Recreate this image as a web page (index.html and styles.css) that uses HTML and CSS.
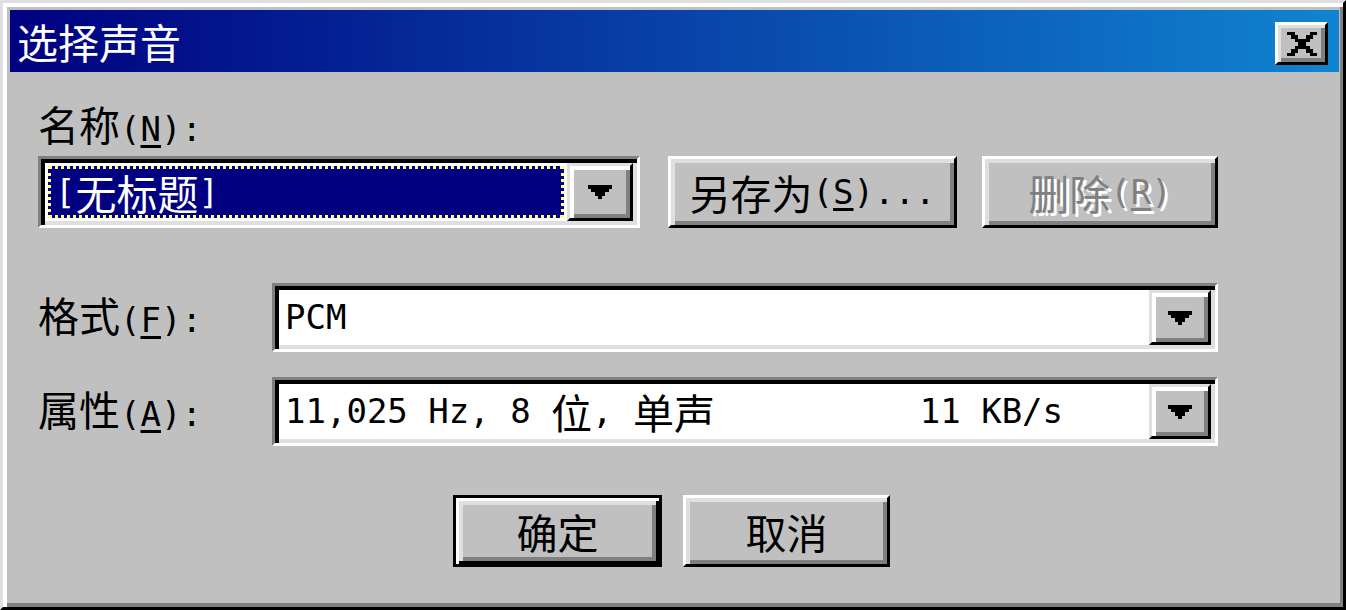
FILE: index.html
```html
<!DOCTYPE html>
<html>
<head>
  <meta charset="utf-8">
  <title>选择声音</title>
  <link rel="stylesheet" href="styles.css">
</head>
<body>
  <div class="window">
    <div class="titlebar">
      <span class="title zh">选择声音</span>
      <button class="close-btn" type="button">
        <svg width="30" height="24" viewBox="0 0 8 7" preserveAspectRatio="none" shape-rendering="crispEdges">
          <path d="M0 0h2v1h-2z M6 0h2v1h-2z M1 1h2v1h-2z M5 1h2v1h-2z M2 2h4v1h-4z M3 3h2v1h-2z M2 4h4v1h-4z M1 5h2v1h-2z M5 5h2v1h-2z M0 6h2v1h-2z M6 6h2v1h-2z" fill="#000"/>
        </svg>
      </button>
    </div>

    <div class="dialog">
      <div class="name-label"><span class="zh">名称</span>(<u>N</u>):</div>

      <div class="field-row row-name">
        <div class="combo combo-name">
          <div class="field field-sel">
            <span class="focus">[<span class="zh">无标题</span>]</span>
          </div>
          <div class="drop-btn">
            <svg width="24" height="14" viewBox="0 0 7 4" preserveAspectRatio="none" shape-rendering="crispEdges"><path d="M0 0h7v1h-7z M1 1h5v1h-5z M2 2h3v1h-3z M3 3h1v1h-1z" fill="#000"/></svg>
          </div>
        </div>
        <button class="btn btn-save" type="button"><span class="zh">另存为</span>(<u>S</u>)...</button>
        <button class="btn btn-delete" type="button" disabled><span class="zh">删除</span>(<u>R</u>)</button>
      </div>

      <div class="field-row row-format">
        <div class="label"><span class="zh">格式</span>(<u>F</u>):</div>
        <div class="combo combo-wide">
          <div class="field">PCM</div>
          <div class="drop-btn">
            <svg width="24" height="14" viewBox="0 0 7 4" preserveAspectRatio="none" shape-rendering="crispEdges"><path d="M0 0h7v1h-7z M1 1h5v1h-5z M2 2h3v1h-3z M3 3h1v1h-1z" fill="#000"/></svg>
          </div>
        </div>
      </div>

      <div class="field-row row-attr">
        <div class="label"><span class="zh">属性</span>(<u>A</u>):</div>
        <div class="combo combo-wide">
          <div class="field">11,025 Hz, 8 <span class="zh">位</span>, <span class="zh">单声</span>          11 KB/s</div>
          <div class="drop-btn">
            <svg width="24" height="14" viewBox="0 0 7 4" preserveAspectRatio="none" shape-rendering="crispEdges"><path d="M0 0h7v1h-7z M1 1h5v1h-5z M2 2h3v1h-3z M3 3h1v1h-1z" fill="#000"/></svg>
          </div>
        </div>
      </div>

      <div class="button-row">
        <button class="btn btn-default btn-ok" type="button"><span class="zh">确定</span></button>
        <button class="btn btn-cancel" type="button"><span class="zh">取消</span></button>
      </div>
    </div>
  </div>
</body>
</html>
```

FILE: styles.css
```css
html, body {
  margin: 0;
  padding: 0;
}
body {
  background: #c0c0c0;
  font-family: "DejaVu Sans Mono", "Noto Sans CJK SC", monospace;
  font-size: 34px;
  color: #000;
}
.zh {
  font-family: "Noto Sans CJK SC", sans-serif;
  font-size: 41px;
}
u {
  text-decoration-thickness: 3px;
  text-underline-offset: 4px;
}

/* window frame */
.window {
  width: 1346px;
  height: 610px;
  box-sizing: border-box;
  background: #c0c0c0;
  border: 3px solid;
  border-color: #dfdfdf #000 #000 #dfdfdf;
  box-shadow: inset 4px 4px 0 #fff, inset -3px -4px 0 #808080;
  padding: 7px 4px 7px 7px;
  display: flex;
  flex-direction: column;
}
.titlebar {
  height: 62px;
  flex: none;
  display: flex;
  align-items: center;
  justify-content: space-between;
  padding: 0 11px 0 7px;
  background: linear-gradient(to right, #000080, #1084d0);
  color: #fff;
}
.title {
  line-height: 62px;
}
.close-btn {
  width: 53px;
  height: 43px;
  margin-top: 5px;
  padding: 0;
  box-sizing: border-box;
  background: #c0c0c0;
  border: 3px solid;
  border-color: #fff #000 #000 #fff;
  box-shadow: inset 3px 3px 0 #dfdfdf, inset -4px -4px 0 #808080;
  display: flex;
  align-items: center;
  justify-content: center;
}

/* dialog body */
.dialog {
  flex: 1;
}
.name-label {
  margin: 31px 0 0 28px;
  height: 41px;
  line-height: 41px;
}
.field-row {
  display: flex;
  align-items: center;
  padding: 0 121px 0 28px;
}
.row-name {
  margin-top: 12px;
  height: 72px;
}
.row-format {
  margin-top: 55px;
  height: 69px;
}
.row-attr {
  margin-top: 25px;
  height: 69px;
}
.label {
  width: 234px;
  flex: none;
  line-height: 41px;
}

/* combo boxes */
.combo {
  display: flex;
  height: 100%;
  box-sizing: border-box;
  background: #fff;
  border: 3px solid;
  border-color: #808080 #fff #fff #808080;
  box-shadow: inset 4px 4px 0 #000, inset -4px -4px 0 #dfdfdf;
  padding: 4px;
}
.combo-name {
  width: 602px;
  flex: none;
  margin-right: 28px;
}
.combo-wide {
  flex: 1;
}
.field {
  flex: 1;
  display: flex;
  align-items: center;
  white-space: pre;
  line-height: 41px;
  padding-left: 6px;
}
.field-sel {
  padding: 3px;
}
.focus {
  flex: 1;
  align-self: stretch;
  display: flex;
  align-items: center;
  padding-left: 4px;
  background: #000080;
  color: #fff;
  border: 3px dotted #ffff80;
}
.drop-btn {
  width: 62px;
  flex: none;
  box-sizing: border-box;
  background: #c0c0c0;
  border: 3px solid;
  border-color: #dfdfdf #000 #000 #dfdfdf;
  box-shadow: inset 4px 4px 0 #fff, inset -4px -4px 0 #808080;
  display: flex;
  align-items: center;
  justify-content: center;
}
.combo-name .drop-btn {
  width: 66px;
}

/* push buttons */
.btn {
  height: 72px;
  padding: 0;
  box-sizing: border-box;
  background: #c0c0c0;
  color: #000;
  font-family: inherit;
  font-size: inherit;
  line-height: 41px;
  white-space: pre;
  border: 3px solid;
  border-color: #fff #000 #000 #fff;
  box-shadow: inset 4px 4px 0 #dfdfdf, inset -4px -4px 0 #808080;
  display: flex;
  align-items: center;
  justify-content: center;
}
.btn-save {
  width: 289px;
  flex: none;
  margin-right: 25px;
}
.btn-delete {
  width: 236px;
  flex: none;
}
.btn:disabled {
  color: #808080;
  text-shadow: 3px 3px 0 #fff;
}
.button-row {
  display: flex;
  justify-content: center;
  gap: 21px;
  margin-top: 49px;
  padding-right: 6px;
}
.btn-default {
  border: 3px solid #000;
  box-shadow: inset 3px 3px 0 #fff, inset -3px -3px 0 #000, inset 7px 7px 0 #dfdfdf, inset -7px -7px 0 #808080;
}
.btn-ok {
  width: 209px;
}
.btn-cancel {
  width: 207px;
}
```
